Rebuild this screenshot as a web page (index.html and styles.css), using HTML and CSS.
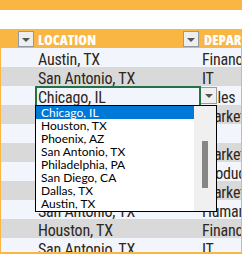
FILE: index.html
```html
<!DOCTYPE html>
<html>
<head>
<meta charset="utf-8">
<link rel="stylesheet" href="styles.css">
</head>
<body>
<div class="sheet">
  <div class="band-top"></div>
  <div class="band-white"></div>
  <div class="table">
    <div class="row head">
      <div class="cell c0"><span class="filter"><i class="tri"></i></span></div>
      <div class="cell c1"><span class="htext">LOCATION</span><span class="filter"><i class="tri"></i></span></div>
      <div class="cell c2"><span class="htext">DEPARTMENT</span></div>
    </div>
    <div class="row light"><div class="cell c0"></div><div class="cell c1">Austin, TX</div><div class="cell c2">Finance</div></div>
    <div class="row gray"><div class="cell c0"></div><div class="cell c1">San Antonio, TX</div><div class="cell c2">IT</div></div>
    <div class="row light"><div class="cell c0"></div><div class="cell c1 active">Chicago, IL<span class="handle"></span></div><div class="cell c2">Sales<span class="dd-btn"><i class="tri"></i></span></div></div>
    <div class="row gray"><div class="cell c0"></div><div class="cell c1">Houston, TX</div><div class="cell c2">Marketing</div></div>
    <div class="row light"><div class="cell c0"></div><div class="cell c1">Phoenix, AZ</div><div class="cell c2">IT</div></div>
    <div class="row gray"><div class="cell c0"></div><div class="cell c1">Dallas, TX</div><div class="cell c2">Marketing</div></div>
    <div class="row light"><div class="cell c0"></div><div class="cell c1">San Diego, CA</div><div class="cell c2">Production</div></div>
    <div class="row gray"><div class="cell c0"></div><div class="cell c1">Austin, TX</div><div class="cell c2">Marketing</div></div>
    <div class="row light"><div class="cell c0"></div><div class="cell c1">San Antonio, TX</div><div class="cell c2">Human</div></div>
    <div class="row gray"><div class="cell c0"></div><div class="cell c1">Houston, TX</div><div class="cell c2">Finance</div></div>
    <div class="row light"><div class="cell c0"></div><div class="cell c1">San Antonio, TX</div><div class="cell c2">IT</div></div>
  </div>
  <div class="dropdown">
    <ul class="items">
      <li class="sel">Chicago, IL</li>
      <li>Houston, TX</li>
      <li>Phoenix, AZ</li>
      <li>San Antonio, TX</li>
      <li>Philadelphia, PA</li>
      <li>San Diego, CA</li>
      <li>Dallas, TX</li>
      <li>Austin, TX</li>
    </ul>
    <div class="scroll"><div class="thumb"></div></div>
  </div>
</div>
</body>
</html>
```

FILE: styles.css
```css
* { box-sizing: border-box; }
html, body { margin: 0; padding: 0; background: #fff; }
.sheet {
  position: relative;
  width: 242px;
  height: 254px;
  overflow: hidden;
  font-family: Roboto, "Liberation Sans", Arial, sans-serif;
}
.band-top { height: 10px; background: #f9b642; }
.band-white { height: 19px; background: #fff; }
.table {
  border-left: 1px solid #f9b642;
  border-right: 1px solid #f9b642;
  border-bottom: 2px solid #f9b642;
  height: 225px;
  overflow: hidden;
}
.row {
  display: grid;
  grid-template-columns: 34px 166px 40px;
  height: 19px;
}
.head { background: #f9b642; margin-left: -1px; grid-template-columns: 35px 166px 40px; }
.light { background: #f2f6fc; }
.gray { background: #d9d9d9; }
.cell {
  position: relative;
  padding: 1px 0 0 3px;
  font-size: 16px;
  font-stretch: 75%;
  letter-spacing: -0.2px;
  line-height: 21px;
  color: #2e2721;
  white-space: nowrap;
  overflow: hidden;
}
.c2 { padding-left: 1px; overflow: hidden; }
.head .cell {
  display: flex;
  align-items: flex-start;
  padding: 2px 0 0 3px;
  letter-spacing: 0;
}
.head .c0 { justify-content: flex-end; padding: 2px 1px 0 0; }
.head .c1 { padding-right: 2px; }
.htext {
  font-family: "Open Sans", sans-serif;
  font-stretch: 75%;
  font-weight: 800;
  font-size: 14px;
  line-height: 17px;
  color: #fff;
  flex: 1;
}
.filter {
  width: 16px;
  height: 16px;
  border: 1px solid #9199a2;
  background: #eeeeee;
  display: flex;
  align-items: center;
  justify-content: center;
  flex: none;
}
.tri {
  width: 0;
  height: 0;
  border-left: 4px solid transparent;
  border-right: 4px solid transparent;
  border-top: 4px solid #555;
  margin-top: 1px;
}
.active {
  outline: 2px solid #217346;
  outline-offset: -2px;
  overflow: visible;
  z-index: 1;
}
.handle {
  position: absolute;
  right: -1px;
  bottom: -2px;
  width: 5px;
  height: 4px;
  background: #217346;
}
.dd-btn {
  position: absolute;
  left: -1px;
  top: 1px;
  width: 17px;
  height: 17px;
  border: 1px solid #9b9b9b;
  background: #f0f0f0;
  display: flex;
  align-items: center;
  justify-content: center;
}
.dropdown {
  position: absolute;
  left: 35px;
  top: 105px;
  width: 182px;
  height: 107px;
  border: 1px solid #000;
  background: #fff;
  display: flex;
  z-index: 2;
}
.items {
  list-style: none;
  margin: 0;
  padding: 0;
  flex: 1;
  font-family: Lato, "Liberation Sans", sans-serif;
  font-size: 12px;
  color: #000;
}
.items li {
  height: 13px;
  line-height: 13px;
  padding-left: 5px;
  white-space: nowrap;
}
.items li.sel { background: #0078d7; color: #fff; }
.scroll {
  width: 22px;
  background: #f0f0f0;
  position: relative;
}
.thumb {
  position: absolute;
  left: 8px;
  top: 35px;
  width: 6px;
  height: 47px;
  background: #868686;
}
```
